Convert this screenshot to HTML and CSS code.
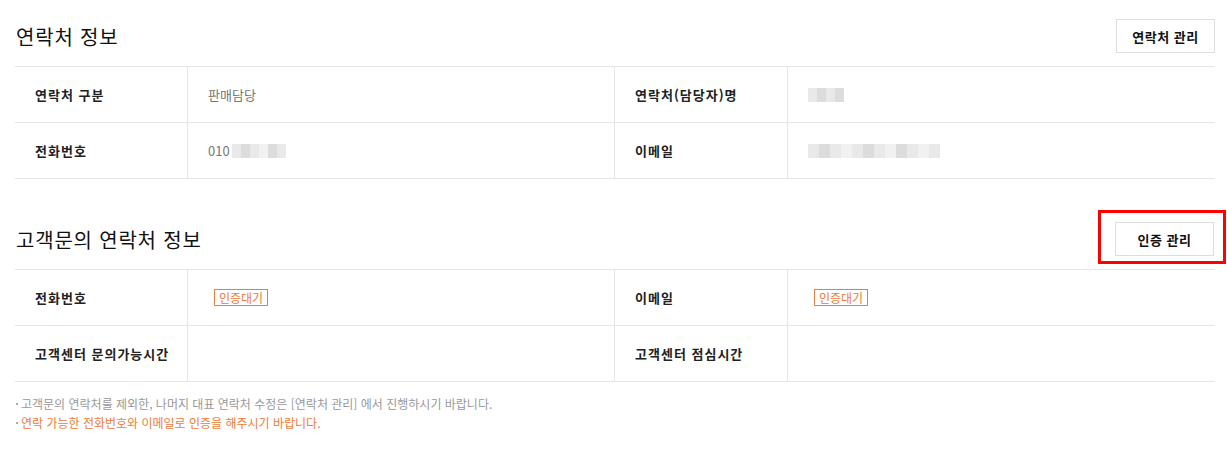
FILE: index.html
```html
<!DOCTYPE html>
<html lang="ko">
<head>
<meta charset="utf-8">
<link rel="stylesheet" href="styles.css">
</head>
<body>
<div class="page">
  <section class="section">
    <div class="sec-head">
      <h2 class="sec-title">연락처 정보</h2>
      <button class="btn">연락처 관리</button>
    </div>
    <div class="info-grid">
      <div class="cell th">연락처 구분</div>
      <div class="cell td">판매담당</div>
      <div class="cell th">연락처(담당자)명</div>
      <div class="cell td"><span class="blur blur-name"><i></i><i class="d"></i><i></i><i class="d"></i></span></div>
      <div class="cell th">전화번호</div>
      <div class="cell td">010<span class="blur blur-phone"><i></i><i class="d"></i><i></i><i class="g"></i><i class="d"></i><i></i></span></div>
      <div class="cell th">이메일</div>
      <div class="cell td"><span class="blur blur-mail"><i></i><i class="d"></i><i></i><i class="g"></i><i></i><i class="d"></i><i></i><i class="g"></i><i class="d"></i><i></i><i class="g"></i><i></i></span></div>
    </div>
  </section>

  <section class="section section-2">
    <div class="sec-head">
      <h2 class="sec-title">고객문의 연락처 정보</h2>
      <div class="btn-wrap">
        <button class="btn">인증 관리</button>
        <span class="highlight"></span>
      </div>
    </div>
    <div class="info-grid">
      <div class="cell th">전화번호</div>
      <div class="cell td"><span class="badge">인증대기</span></div>
      <div class="cell th">이메일</div>
      <div class="cell td"><span class="badge">인증대기</span></div>
      <div class="cell th">고객센터 문의가능시간</div>
      <div class="cell td"></div>
      <div class="cell th">고객센터 점심시간</div>
      <div class="cell td"></div>
    </div>
  </section>

  <ul class="notes">
    <li>고객문의 연락처를 제외한, 나머지 대표 연락처 수정은 [연락처 관리] 에서 진행하시기 바랍니다.</li>
    <li class="accent">연락 가능한 전화번호와 이메일로 인증을 해주시기 바랍니다.</li>
  </ul>
</div>
</body>
</html>
```

FILE: styles.css
```css
* { box-sizing: border-box; }
html, body { margin: 0; padding: 0; background: #fff; }
body {
  font-family: "Noto Sans CJK KR", "Noto Sans", sans-serif;
  color: #222;
  overflow: hidden;
}
.page {
  width: 1200px;
  margin-left: 15px;
  padding-top: 19px;
}
.section-2 { margin-top: 43px; }
.sec-head {
  display: flex;
  align-items: center;
  justify-content: space-between;
  height: 34px;
  margin-bottom: 13px;
}
.sec-title {
  margin: 0;
  font-size: 20px;
  font-weight: 400;
  color: #111;
  letter-spacing: 0.8px;
  padding-left: 1px;
}
.btn {
  width: 99px;
  height: 34px;
  border: 1px solid #dedede;
  background: #fff;
  font-family: inherit;
  font-size: 13px;
  font-weight: 700;
  color: #111;
  letter-spacing: 0.5px;
  padding: 0;
  cursor: pointer;
}
.btn-wrap { position: relative; margin-right: 1px; }
.highlight {
  position: absolute;
  left: -17px;
  top: -12px;
  width: 128px;
  height: 54px;
  border: 3px solid #ff0000;
  pointer-events: none;
}
.info-grid {
  display: grid;
  grid-template-columns: 172px 427px 173px 428px;
  border-top: 1px solid #e6e6e6;
}
.cell {
  height: 56px;
  display: flex;
  align-items: center;
  border-bottom: 1px solid #e6e6e6;
  font-size: 13px;
  padding-left: 20px;
}
.cell + .cell { border-left: 1px solid #e6e6e6; }
.cell.th:nth-child(4n+1) { border-left: none; }
.th { font-weight: 700; color: #222; letter-spacing: 1px; }
.td { color: #777; }
.blur { display: inline-flex; height: 14px; }
.blur i { display: block; width: 6px; height: 100%; background: #e9e9e9; }
.blur i.d { background: #dcdcdc; }
.blur i.g { background: #f1f1f1; }
.blur-phone { margin-left: 2px; }
.blur-phone i { width: 9px; }
.blur-name i { width: 9px; }
.blur-mail i { width: 11px; }
.badge {
  display: inline-block;
  border: 1px solid #f07a36;
  color: #f07a36;
  font-size: 12px;
  line-height: 15px;
  padding: 0 4px;
  margin-left: 6px;
}
.notes {
  list-style: none;
  margin: 12px 0 0;
  padding: 0;
  font-size: 12px;
  color: #999;
  line-height: 19px;
}
.notes li { position: relative; padding-left: 6px; }
.notes li::before {
  content: "";
  position: absolute;
  left: 1px;
  top: 9px;
  width: 2px;
  height: 2px;
  background: #aaa;
}
.notes li.accent { color: #f07a36; }
```
